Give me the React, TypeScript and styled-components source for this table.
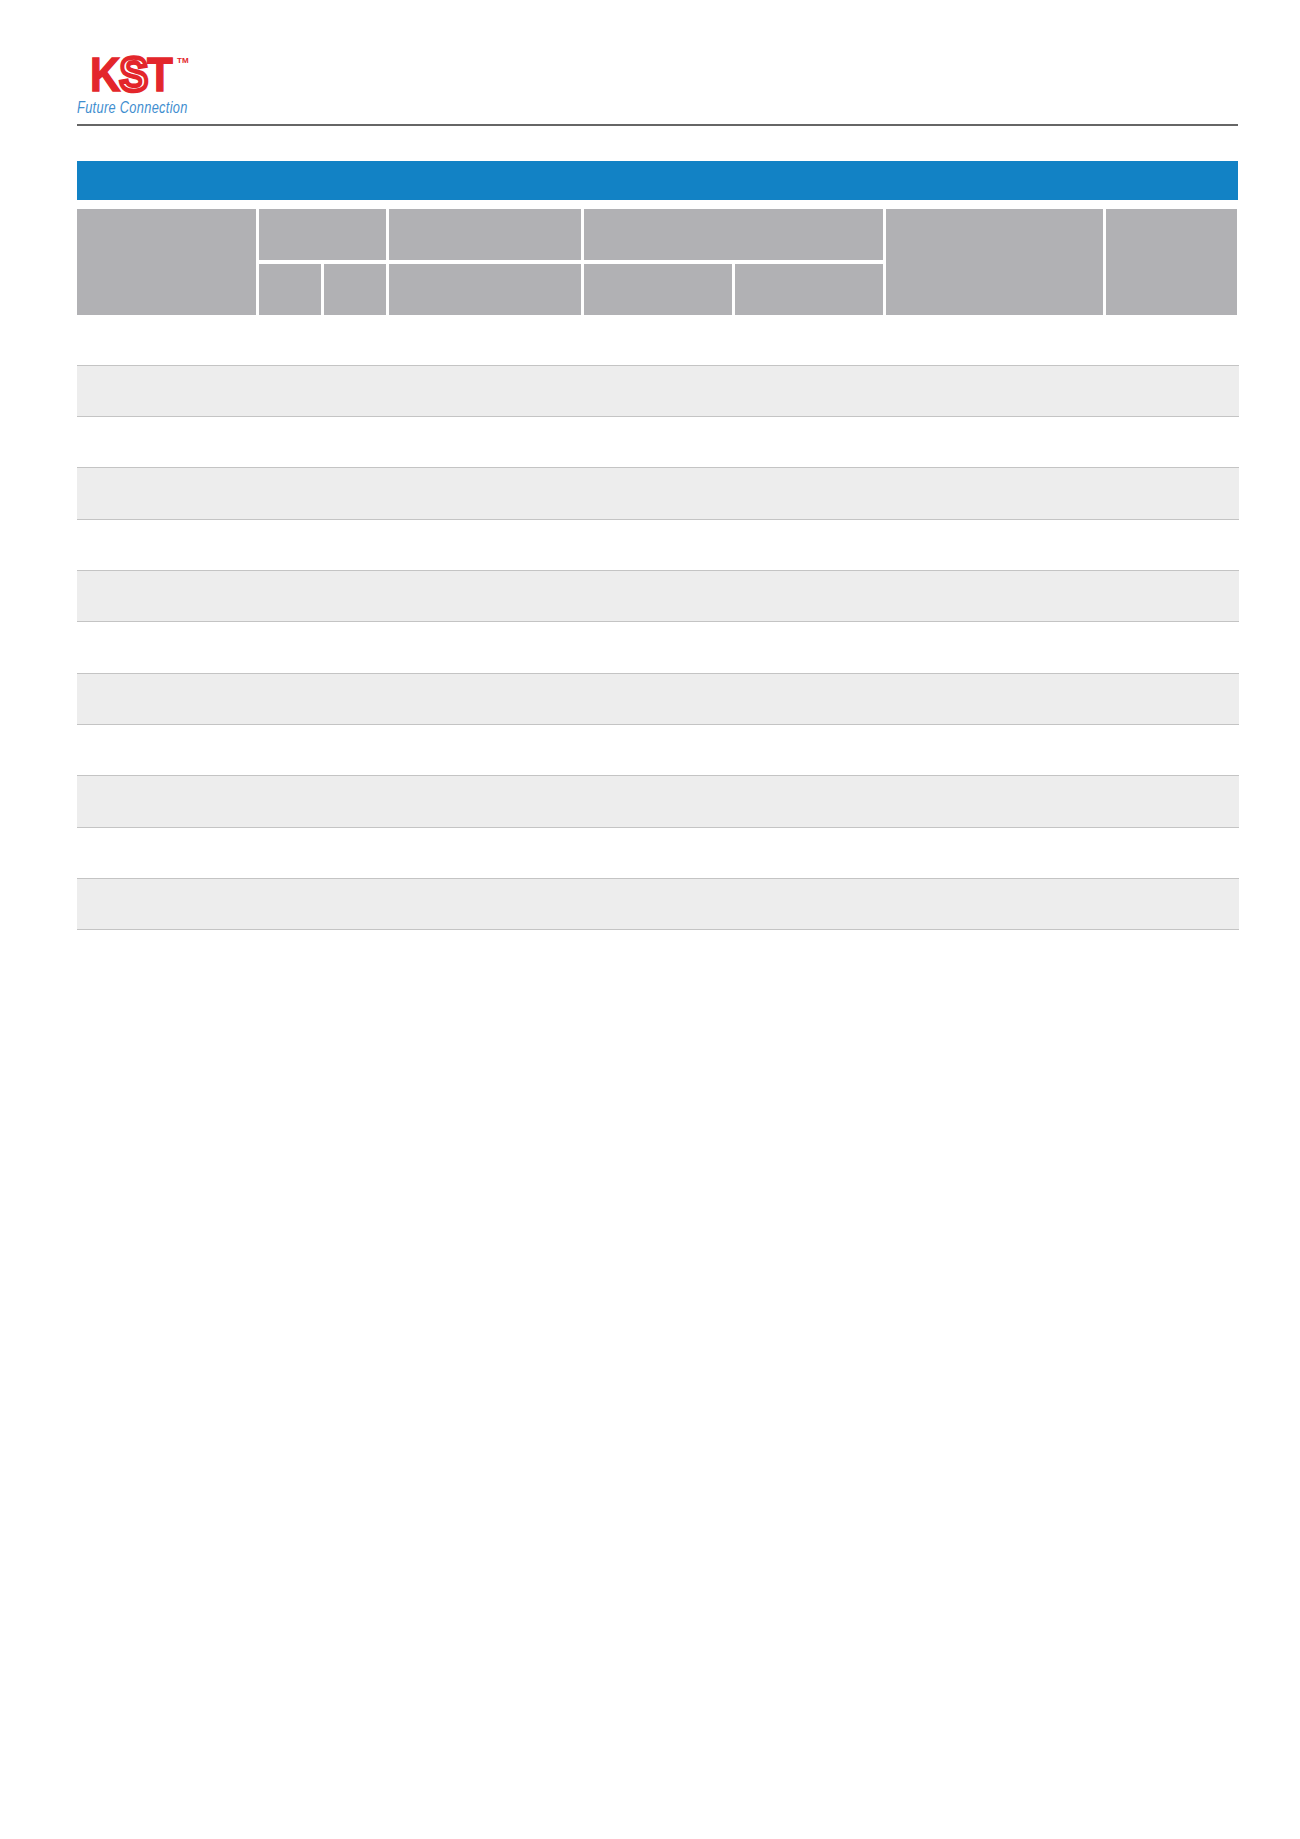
import React from 'react';
import styled, { createGlobalStyle } from 'styled-components';

const GlobalStyle = createGlobalStyle`
  html, body {
    margin: 0;
    padding: 0;
    background: #ffffff;
    font-family: "Liberation Sans", Arial, sans-serif;
  }
`;

const Page = styled.div`
  width: 1300px;
  min-height: 1839px;
  padding: 0 61px 0 77px;
  box-sizing: border-box;
`;

const Header = styled.header`
  display: flex;
  flex-direction: column;
  padding-top: 51px;
`;

const LogoMark = styled.div`
  display: flex;
  align-items: flex-start;
  margin-left: 13px;
  height: 48px;
`;

const LogoWord = styled.div`
  width: 82px;
  height: 48px;
`;

const LogoLetters = styled.span`
  display: inline-block;
  white-space: nowrap;
  font-size: 48px;
  font-weight: 700;
  line-height: 48px;
  color: #e3262b;
  -webkit-text-stroke: 1.4px #e3262b;
  letter-spacing: -1px;
  transform: scaleX(0.88);
  transform-origin: left center;
`;

const LogoOutlineS = styled.span`
  color: #ffffff;
  -webkit-text-stroke: 4.6px #e3262b;
`;

const Trademark = styled.span`
  font-size: 8px;
  font-weight: 700;
  line-height: 9px;
  color: #e3262b;
  margin-left: 5px;
  margin-top: 5px;
`;

const Tagline = styled.div`
  margin-top: 1px;
  font-size: 16px;
  font-style: italic;
  line-height: 16px;
  color: #3f8ecf;
  letter-spacing: 0.4px;
  white-space: nowrap;
  transform: scaleX(0.8);
  transform-origin: left center;
`;

const Rule = styled.div`
  margin-top: 8px;
  height: 1.5px;
  width: 1161px;
  background: #666666;
`;

const TitleBar = styled.div`
  margin-top: 35px;
  height: 39px;
  width: 1161px;
  background: #1282c5;
`;

const HeadGrid = styled.div`
  margin-top: 9px;
  display: grid;
  width: 1162px;
  grid-template-columns: 179px 62px 62px 192px 148px 148px 217px 131px;
  grid-template-rows: 51px 51px;
  column-gap: 3px;
  row-gap: 4px;
`;

const HeadCell = styled.div<{ $col: string; $row: string }>`
  grid-column: ${({ $col }) => $col};
  grid-row: ${({ $row }) => $row};
  background: #b1b1b4;
`;

const Body = styled.div`
  width: 1162px;
  display: flex;
  flex-direction: column;
`;

const Row = styled.div<{ $shaded: boolean }>`
  height: 51.33px;
  box-sizing: border-box;
  background: ${({ $shaded }) => ($shaded ? '#ededed' : '#ffffff')};
  border-bottom: 1.5px solid #c4c4c4;
`;

const headCells: { col: string; row: string }[] = [
  { col: '1', row: '1 / span 2' },
  { col: '2 / span 2', row: '1' },
  { col: '2', row: '2' },
  { col: '3', row: '2' },
  { col: '4', row: '1' },
  { col: '4', row: '2' },
  { col: '5 / span 2', row: '1' },
  { col: '5', row: '2' },
  { col: '6', row: '2' },
  { col: '7', row: '1 / span 2' },
  { col: '8', row: '1 / span 2' },
];

const rows = Array.from({ length: 12 }, (_, i) => i);

const App: React.FC = () => {
  return (
    <>
      <GlobalStyle />
      <Page>
        <Header>
          <LogoMark>
            <LogoWord>
              <LogoLetters>
                K<LogoOutlineS>S</LogoOutlineS>T
              </LogoLetters>
            </LogoWord>
            <Trademark>TM</Trademark>
          </LogoMark>
          <Tagline>Future Connection</Tagline>
          <Rule />
        </Header>

        <TitleBar />

        <HeadGrid>
          {headCells.map((c, i) => (
            <HeadCell key={i} $col={c.col} $row={c.row} />
          ))}
        </HeadGrid>

        <Body>
          {rows.map((i) => (
            <Row key={i} $shaded={i % 2 === 1} />
          ))}
        </Body>
      </Page>
    </>
  );
};

export default App;
